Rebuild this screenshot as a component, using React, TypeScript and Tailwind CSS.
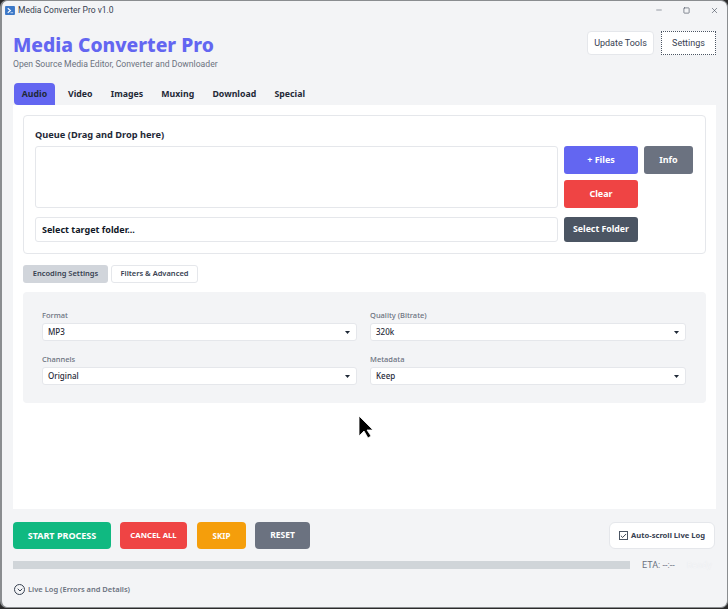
import { ChevronDown, Check, Minus, Square, X } from "lucide-react";

const font = "[font-family:'Noto_Sans','Open_Sans',sans-serif]";

function Caret() {
  return (
    <svg width="5" height="3" viewBox="0 0 5 3" className="shrink-0">
      <path d="M0 0h5L2.500 3z" fill="#1f2937" />
    </svg>
  );
}

function Field({ label, value }: { label: string; value: string }) {
  return (
    <div className="flex flex-col">
      <div className="h-[14px] text-[7.500px] leading-[12px] font-medium text-[#6b7280]">{label}</div>
      <div className="flex h-[18px] items-center justify-between rounded-[3px] border border-[#e5e7eb] bg-white pr-[6px] pl-[5px] text-[8px] font-medium text-[#1f2937]">
        <span>{value}</span>
        <Caret />
      </div>
    </div>
  );
}

export default function App() {
  const tabs = ["Video", "Images", "Muxing", "Download", "Special"];
  return (
    <div className={`${font} relative h-[609px] w-[728px] overflow-hidden bg-[#2b2b2b]`}>
      <div className="flex h-[608px] w-[728px] flex-col rounded-[7px] border-t border-r border-b border-l-2 border-[#8a8d90] bg-[#f3f4f6]">
        {/* Title bar */}
        <div className="flex h-[18px] shrink-0 items-center justify-between pr-[4px] pl-[3px]">
          <div className="flex items-center">
            <svg width="10" height="9" viewBox="0 0 11 10" className="mr-[3px]">
              <rect width="11" height="10" rx="1" fill="#3b78c8" />
              <path d="M3 2.500 6 5 3 7.500" stroke="#fff" strokeWidth="1.200" fill="none" />
              <path d="M6 7.500h3" stroke="#cfe0f5" strokeWidth="1" />
            </svg>
            <span className="[font-family:Roboto,sans-serif] text-[8.500px] leading-none text-[#374151]">Media Converter Pro v1.0</span>
          </div>
          <div className="flex items-center gap-[20px] pr-[4px] text-[#374151]">
            <Minus size={8} strokeWidth={1.500} />
            <Square size={7} strokeWidth={2} />
            <X size={9} strokeWidth={1.500} />
          </div>
        </div>

        {/* Header */}
        <div className="flex h-[45px] shrink-0 items-start justify-between pt-[12px] pr-[11px] pl-[11px]">
          <div className="flex flex-col">
            <div className="text-[19.250px] leading-[28px] font-extrabold whitespace-nowrap text-[#6366f1]">Media Converter Pro</div>
            <div className="[font-family:Roboto,sans-serif] text-[8.650px] leading-[11px] whitespace-nowrap text-[#6b7280]">Open Source Media Editor, Converter and Downloader</div>
          </div>
          <div className="flex gap-[7px]">
            <div className="flex h-[24px] w-[67px] items-center justify-center rounded-[4px] border border-[#e5e7eb] bg-white pt-[1px] [font-family:Roboto,sans-serif] text-[9px] text-[#374151]">Update Tools</div>
            <div className="flex h-[24px] w-[55px] items-center justify-center border border-dotted border-[#4b5563] bg-white pt-[1px] [font-family:Roboto,sans-serif] text-[9px] text-[#374151]">Settings</div>
          </div>
        </div>

        {/* Tabs */}
        <div className="mt-[19px] flex h-[22px] shrink-0 items-stretch gap-[1px] pl-[12px] text-[8.750px] font-bold text-[#1f2937]">
          <div className="flex w-[41px] items-center justify-center rounded-t-[4px] rounded-bl-[4px] bg-[#6366f1] pt-[2px]">Audio</div>
          <div className="flex items-stretch gap-[18.250px] pt-[2px] pl-[12px]">
            {tabs.map((t) => (
              <div key={t} className="flex items-center">{t}</div>
            ))}
          </div>
        </div>

        {/* Main white panel */}
        <div className="mr-[11px] ml-[11px] flex h-[404px] shrink-0 flex-col bg-white px-[10px] pt-[10px]">
          {/* Queue card */}
          <div className="flex h-[139px] shrink-0 flex-col rounded-[4px] border border-[#e5e7eb] bg-white pt-[12px] pr-[11px] pl-[11px]">
            <div className="h-[18px] text-[9.250px] leading-[14px] font-bold text-[#1f2937]">Queue (Drag and Drop here)</div>
            <div className="flex gap-[6px]">
              <div className="h-[62px] flex-1 rounded-[3px] border border-[#e5e7eb] bg-white" />
              <div className="flex w-[130px] flex-wrap content-between gap-x-[6px]">
                <div className="flex h-[28px] w-[74px] items-center justify-center rounded-[3px] bg-[#6366f1] text-[9px] font-bold text-white">+ Files</div>
                <div className="flex h-[28px] w-[49px] items-center justify-center rounded-[3px] bg-[#6b7280] text-[9px] font-bold text-white">Info</div>
                <div className="flex h-[28px] w-[74px] items-center justify-center rounded-[3px] bg-[#ef4444] text-[9px] font-bold text-white">Clear</div>
              </div>
            </div>
            <div className="mt-[9px] flex gap-[6px]">
              <div className="flex h-[25px] flex-1 items-center rounded-[3px] border border-[#e5e7eb] bg-white pt-[1px] pl-[6px] text-[9px] font-bold text-[#111827]">Select target folder...</div>
              <div className="w-[130px]">
                <div className="flex h-[25px] w-[74px] items-center justify-center rounded-[3px] bg-[#4b5563] pt-[1px] text-[8.750px] font-bold whitespace-nowrap text-white">Select Folder</div>
              </div>
            </div>
          </div>

          {/* Subtabs */}
          <div className="mt-[11px] flex h-[18px] shrink-0 gap-[3px] text-[7.500px] font-semibold text-[#374151]">
            <div className="flex w-[85px] items-center justify-center rounded-[3px] bg-[#d1d5db]">Encoding Settings</div>
            <div className="flex w-[87px] items-center justify-center rounded-[3px] border border-[#e5e7eb] bg-white">Filters &amp; Advanced</div>
          </div>

          {/* Settings panel */}
          <div className="mt-[9px] grid h-[111px] shrink-0 grid-cols-[315px_316px] content-start gap-x-[13px] gap-y-[12px] rounded-[4px] bg-[#f3f4f6] pt-[17px] pl-[19px]">
            <Field label="Format" value="MP3" />
            <Field label="Quality (Bitrate)" value="320k" />
            <Field label="Channels" value="Original" />
            <Field label="Metadata" value="Keep" />
          </div>
        </div>

        {/* Action row */}
        <div className="mt-[13px] flex h-[27px] shrink-0 items-stretch justify-between pr-[12px] pl-[11px]">
          <div className="flex items-stretch text-white">
            <div className="flex w-[98px] items-center justify-center rounded-[4px] bg-[#10b981] text-[9px] font-bold">START PROCESS</div>
            <div className="ml-[9px] flex w-[67px] items-center justify-center rounded-[4px] bg-[#ef4444] text-[7.750px] font-bold">CANCEL ALL</div>
            <div className="ml-[10px] flex w-[49px] items-center justify-center rounded-[4px] bg-[#f59e0b] text-[8px] font-bold">SKIP</div>
            <div className="ml-[9px] flex w-[55px] items-center justify-center rounded-[4px] bg-[#6b7280] text-[8.500px] font-bold">RESET</div>
          </div>
          <div className="flex w-[106px] items-center justify-center gap-[3px] rounded-[6px] border border-[#e5e7eb] bg-white text-[7.600px] font-bold text-[#374151]">
            <span className="flex h-[9px] w-[9px] items-center justify-center border border-[#4b5563] bg-white">
              <Check size={8} strokeWidth={3} className="text-[#1f2937]" />
            </span>
            <span>Auto-scroll Live Log</span>
          </div>
        </div>

        {/* Progress row */}
        <div className="mt-[11px] flex h-[10px] shrink-0 items-center pl-[11px]">
          <div className="h-[8px] w-[617px] bg-[#d0d5d9]" />
          <span className="ml-[12px] pt-[1px] [font-family:Roboto,sans-serif] text-[9px] text-[#6b7280]">ETA: --:--</span>
          <span className="ml-[12px] text-[8.500px] font-semibold text-[#f3f4f6] [text-shadow:0_0_1px_#e8eaee]">Ready</span>
        </div>

        {/* Live log */}
        <div className="mt-[14px] flex items-center gap-[3px] pl-[12px]">
          <span className="flex h-[11px] w-[11px] items-center justify-center rounded-full border border-[#374151]">
            <ChevronDown size={8} strokeWidth={3} className="text-[#374151]" />
          </span>
          <span className="text-[7.500px] font-semibold text-[#6b7280]">Live Log (Errors and Details)</span>
        </div>
      </div>

      {/* Mouse cursor */}
      <svg width="16" height="24" viewBox="0 0 16 24" className="absolute top-[415px] left-[358px]">
        <path d="M1 1v20l5-5 4 7 3-2-4-6h6z" fill="#000" stroke="#fff" strokeWidth="0.800" />
      </svg>
    </div>
  );
}
